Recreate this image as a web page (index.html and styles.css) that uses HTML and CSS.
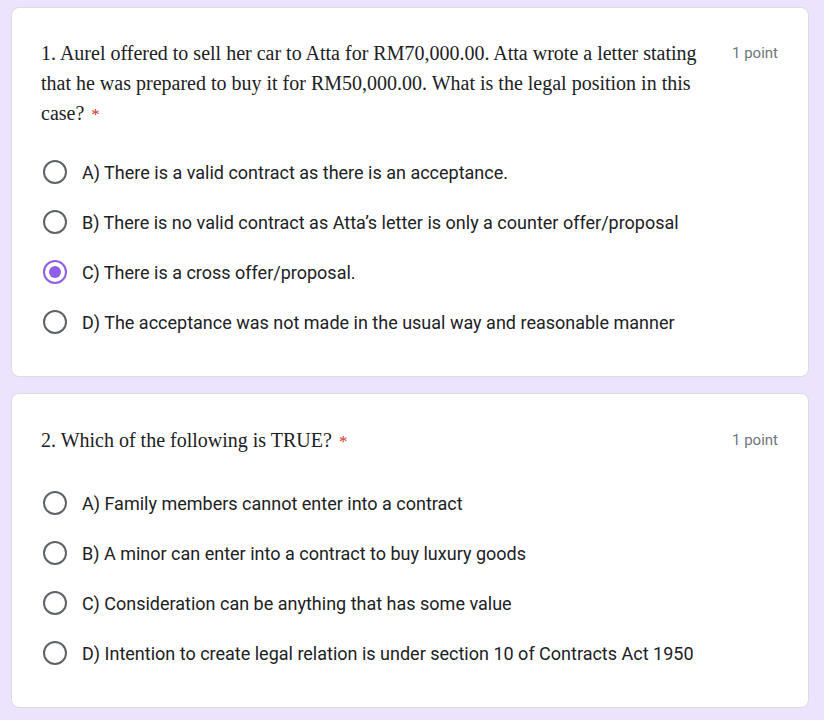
FILE: index.html
```html
<!DOCTYPE html>
<html>
<head>
<meta charset="utf-8">
<link rel="stylesheet" href="styles.css">
</head>
<body>
<div class="page">
  <div class="card">
    <div class="head">
      <div class="question">1. Aurel offered to sell her car to Atta for RM70,000.00. Atta wrote a letter stating that he was prepared to buy it for RM50,000.00. What is the legal position in this case?<span class="req">*</span></div>
      <div class="points">1 point</div>
    </div>
    <div class="options">
      <div class="opt"><span class="radio"></span><span class="label">A) There is a valid contract as there is an acceptance.</span></div>
      <div class="opt"><span class="radio"></span><span class="label">B) There is no valid contract as Atta’s letter is only a counter offer/proposal</span></div>
      <div class="opt"><span class="radio checked"></span><span class="label">C) There is a cross offer/proposal.</span></div>
      <div class="opt"><span class="radio"></span><span class="label">D) The acceptance was not made in the usual way and reasonable manner</span></div>
    </div>
  </div>
  <div class="card card-short">
    <div class="head">
      <div class="question">2. Which of the following is TRUE?<span class="req">*</span></div>
      <div class="points">1 point</div>
    </div>
    <div class="options">
      <div class="opt"><span class="radio"></span><span class="label">A) Family members cannot enter into a contract</span></div>
      <div class="opt"><span class="radio"></span><span class="label">B) A minor can enter into a contract to buy luxury goods</span></div>
      <div class="opt"><span class="radio"></span><span class="label">C) Consideration can be anything that has some value</span></div>
      <div class="opt"><span class="radio"></span><span class="label">D) Intention to create legal relation is under section 10 of Contracts Act 1950</span></div>
    </div>
  </div>
</div>
</body>
</html>
```
FILE: styles.css
```css
html, body {
  margin: 0;
  padding: 0;
  background: #ebe4fc;
}
.page {
  padding: 7px 15px 13px 11px;
  display: flex;
  flex-direction: column;
  gap: 16px;
}
.card {
  background: #fff;
  border: 1px solid #dadce0;
  border-radius: 8px;
  padding: 30px 30px 29px 29px;
}
.card-short {
  padding-top: 31px;
}
.head {
  display: flex;
  align-items: flex-start;
  gap: 24px;
}
.question {
  flex: 1;
  font-family: "Liberation Serif", "Times New Roman", serif;
  font-size: 20px;
  line-height: 30px;
  color: #202124;
  max-width: 668px;
}
.req {
  color: #d93025;
  font-size: 17px;
  margin-left: 7px;
}
.points {
  margin-left: auto;
  font-family: Roboto, "Liberation Sans", sans-serif;
  font-size: 15px;
  line-height: 30px;
  color: #70757a;
  white-space: nowrap;
}
.options {
  margin-top: 17px;
  display: flex;
  flex-direction: column;
}
.card-short .options {
  margin-top: 21px;
}
.opt {
  height: 50px;
  display: flex;
  align-items: center;
  gap: 15px;
  padding-left: 2px;
}
.radio {
  width: 24px;
  height: 24px;
  box-sizing: border-box;
  border: 2px solid #5f6368;
  border-radius: 50%;
  flex: none;
  display: flex;
  align-items: center;
  justify-content: center;
}
.radio.checked {
  border-color: #8f5ee8;
}
.radio.checked::after {
  content: "";
  width: 12px;
  height: 12px;
  border-radius: 50%;
  background: #8f5ee8;
}
.label {
  font-family: Roboto, "Liberation Sans", sans-serif;
  font-size: 18px;
  color: #202124;
}
```
